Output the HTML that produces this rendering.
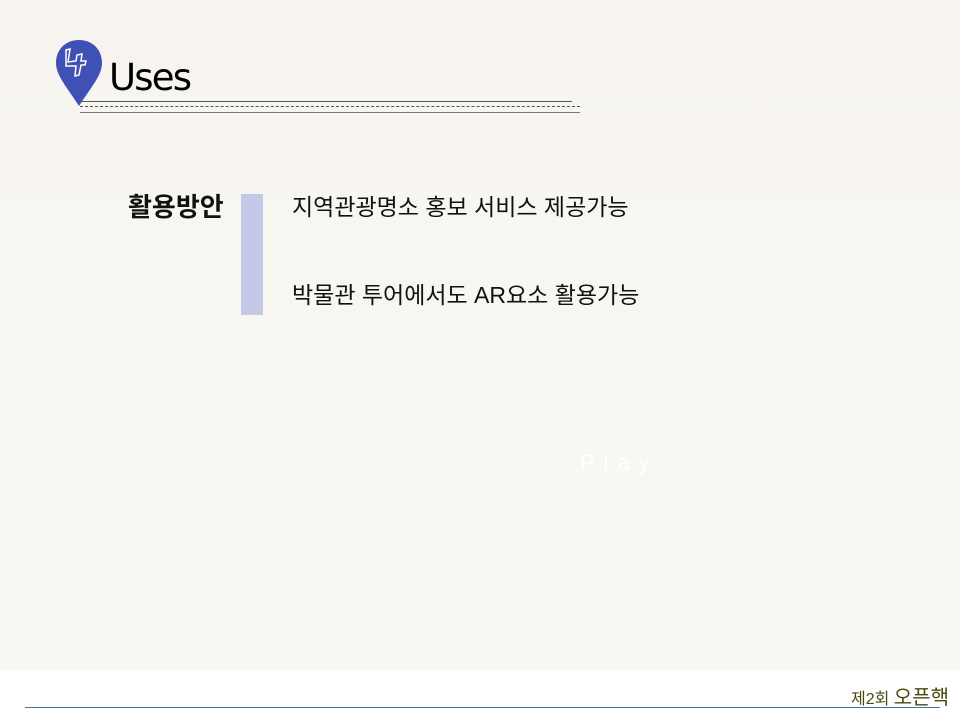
<!DOCTYPE html>
<html><head><meta charset="utf-8"><style>
body{margin:0;width:960px;height:720px;overflow:hidden;font-family:"Liberation Sans","Noto Sans CJK KR",sans-serif;position:relative;background:#fff}
.bg{position:absolute;left:0;top:0;width:960px;height:670px;background:linear-gradient(#f7f4ef,#f9f9f4)}
.t{position:absolute;white-space:nowrap}
</style></head><body>
<div class="bg"></div>
<svg class="t" style="left:54px;top:38px" width="52" height="70" viewBox="0 0 52 70">
<path d="M25 2C11 2 2 12 2 25C2 37 12 48 25 68C38 48 48 37 48 25C48 12 39 2 25 2Z" fill="#3f51b5"/>
<path d="M12 12L16 11L14 24L22 23L23 17L28 16L27 23L32 23L31 27L27 27L25 37L21 38L22 28L12 28Z" fill="none" stroke="#fff" stroke-width="1.5"/>
</svg>
<div class="t" style="left:109px;top:56px;font-size:37px;color:#000;font-family:'DejaVu Sans','Liberation Sans',sans-serif;letter-spacing:-1.8px">Uses</div>
<div class="t" style="left:80px;top:101px;width:492px;border-top:1px solid #555"></div>
<div class="t" style="left:80px;top:106px;width:500px;border-top:1px dashed #555"></div>
<div class="t" style="left:80px;top:112px;width:500px;border-top:1px solid #777"></div>
<div class="t" style="left:128px;top:187px;font-size:26px;font-weight:bold;color:#111">활용방안</div>
<div class="t" style="left:241px;top:194px;width:22px;height:121px;background:#c5c9e8"></div>
<div class="t" style="left:292px;top:188px;font-size:23px;color:#111">지역관광명소 홍보 서비스 제공가능</div>
<div class="t" style="left:292px;top:276px;font-size:23px;color:#111">박물관 투어에서도 AR요소 활용가능</div>
<div class="t" style="left:580px;top:450px;font-size:22px;color:#fff;letter-spacing:9px">Play</div>
<div class="t" style="left:851px;top:681px;font-size:16px;color:#4a4a10">제2회 <span style="font-size:20px">오픈핵</span></div>
<div class="t" style="left:25px;top:707px;width:915px;border-top:1px solid #4a6fa5"></div>
</body></html>
